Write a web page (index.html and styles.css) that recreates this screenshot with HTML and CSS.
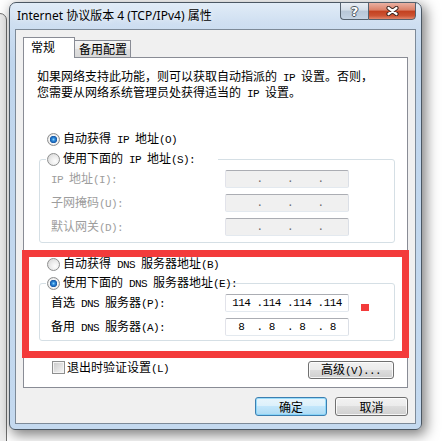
FILE: index.html
```html
<!DOCTYPE html>
<html lang="zh-CN">

<head>
    <meta charset="UTF-8">
    <title>Internet 协议版本 4 (TCP/IPv4) 属性</title>
    <link rel="stylesheet" href="styles.css">
</head>

<body>
    <div class="backwin"></div>

    <div class="window">
        <div class="titlebar">
            <div class="caption">Internet 协议版本 4 (TCP/IPv4) 属性</div>
            <div class="capbtns">
                <div class="capbtn help">?</div>
                <div class="capbtn close">
                    <svg width="13" height="10" viewBox="0 0 13 10">
                        <path d="M2.5 2 L10.5 8 M10.5 2 L2.5 8" stroke="#3d2620" stroke-width="4.2" stroke-linecap="round" fill="none" />
                        <path d="M2.5 2 L10.5 8 M10.5 2 L2.5 8" stroke="#fff" stroke-width="2.2" stroke-linecap="round" fill="none" />
                    </svg>
                </div>
            </div>
        </div>

        <div class="client">
            <div class="tabs">
                <div class="tab active">常规</div>
                <div class="tab">备用配置</div>
            </div>

            <div class="panel">
                <p class="intro">如果网络支持此功能，则可以获取自动指派的<span class="en"> IP </span>设置。否则，<br>您需要从网络系统管理员处获得适当的<span class="en"> IP </span>设置。</p>

                <div class="radio-row first"><span class="radio on"></span><span class="txt">自动获得<span class="en"> IP </span>地址<span class="en">(O)</span></span></div>

                <fieldset class="group">
                    <legend>
                        <div class="radio-row"><span class="radio"></span><span class="txt">使用下面的<span class="en"> IP </span>地址<span class="en">(S):</span></span></div>
                    </legend>
                    <div class="field disabled">
                        <label><span class="en">IP </span>地址<span class="en">(I):</span></label>
                        <div class="ipbox"><span></span><span></span><span></span><span></span></div>
                    </div>
                    <div class="field disabled">
                        <label>子网掩码<span class="en">(U):</span></label>
                        <div class="ipbox"><span></span><span></span><span></span><span></span></div>
                    </div>
                    <div class="field disabled">
                        <label>默认网关<span class="en">(D):</span></label>
                        <div class="ipbox"><span></span><span></span><span></span><span></span></div>
                    </div>
                </fieldset>

                <div class="dns">
                    <div class="radio-row dns-auto"><span class="radio"></span><span class="txt">自动获得<span class="en"> DNS </span>服务器地址<span class="en">(B)</span></span></div>

                    <fieldset class="group dns-group">
                        <legend>
                            <div class="radio-row"><span class="radio on"></span><span class="txt">使用下面的<span class="en"> DNS </span>服务器地址<span class="en">(E):</span></span></div>
                        </legend>
                        <div class="field">
                            <label>首选<span class="en"> DNS </span>服务器<span class="en">(P):</span></label>
                            <div class="ipbox"><span>114</span><span>114</span><span>114</span><span>114</span></div>
                            <span class="mark"></span>
                        </div>
                        <div class="field">
                            <label>备用<span class="en"> DNS </span>服务器<span class="en">(A):</span></label>
                            <div class="ipbox"><span>8</span><span>8</span><span>8</span><span>8</span></div>
                        </div>
                    </fieldset>
                </div>

                <div class="options">
                    <div class="check"><span class="checkbox"></span><span class="txt">退出时验证设置<span class="en">(L)</span></span></div>
                    <button class="btn adv">高级<span class="en">(V)...</span></button>
                </div>
            </div>

            <div class="actions">
                <button class="btn default ok">确定</button>
                <button class="btn cancel">取消</button>
            </div>
        </div>
    </div>
</body>

</html>
```

FILE: styles.css
```css
* {
    box-sizing: border-box;
}

html,
body {
    margin: 0;
    height: 100%;
}

body {
    position: relative;
    overflow: hidden;
    background: #fff;
    font-family: "Noto Sans CJK SC", "Noto Sans", sans-serif;
    font-size: 12px;
    color: #000;
}

.en {
    font-family: "Liberation Mono", monospace;
    font-size: 11px;
    letter-spacing: -0.6px;
    white-space: pre;
}

/* window peeking out behind the dialog */
.backwin {
    position: absolute;
    left: -20px;
    top: 13px;
    width: 27px;
    height: 440px;
    background: #ececec;
    border: 1px solid #6f6f6f;
    border-radius: 0 7px 0 0;
}

.window {
    position: relative;
    display: flex;
    flex-direction: column;
    width: 413px;
    height: 428px;
    margin: 2px 0 0 9px;
    padding: 0 5px 5px;
    border: 1px solid #4b5763;
    border-radius: 7px 7px 6px 6px;
    background: linear-gradient(180deg, #e1ecf7 0, #cfdff1 20px, #c0d6ed 60px, #c4d9ef 100%);
    box-shadow: 3px 4px 13px 1px rgba(0, 0, 0, .5);
}

.titlebar {
    display: flex;
    justify-content: space-between;
    align-items: flex-start;
    height: 26px;
    flex: none;
}

.caption {
    padding-left: 2px;
    line-height: 25px;
    font-family: "Noto Sans", "Noto Sans CJK SC", sans-serif;
    font-size: 12px;
    text-shadow: 0 0 6px rgba(255, 255, 255, .95);
}

.capbtns {
    display: flex;
    margin-top: -1px;
}

.capbtn {
    display: flex;
    align-items: center;
    justify-content: center;
    height: 18px;
    border: 1px solid #55616e;
}

.help {
    width: 28px;
    border-right: none;
    border-radius: 0 0 0 4px;
    background: linear-gradient(#e9eef4 0, #d3dde8 45%, #b7c6d7 50%, #c4d3e4 100%);
    color: #fff;
    font-family: "DejaVu Sans", sans-serif;
    font-weight: bold;
    font-size: 13px;
    text-shadow: 1px 0 #4b5560, -1px 0 #4b5560, 0 1px #4b5560, 0 -1px #4b5560;
}

.close {
    width: 48px;
    border-radius: 0 0 4px 0;
    background: linear-gradient(#eab0a2 0, #db8068 45%, #c3401f 50%, #cc5333 80%, #e2876c 100%);
}

.client {
    flex: 1;
    display: flex;
    flex-direction: column;
    padding: 7px;
    background: #f0f0f0;
    border: 1px solid #7d8a98;
}

.tabs {
    display: flex;
    align-items: flex-end;
    height: 20px;
    flex: none;
}

.tab {
    height: 17px;
    width: 57px;
    margin-left: -1px;
    padding-left: 4px;
    line-height: 16px;
    border: 1px solid #898c95;
    border-bottom: none;
    background: linear-gradient(#f5f5f5 0, #ebebeb 50%, #dfdfdf 51%, #d8d8d8 100%);
}

.tab.active {
    position: relative;
    z-index: 1;
    height: 21px;
    width: 52px;
    margin-left: 0;
    margin-bottom: -1px;
    padding-left: 7px;
    line-height: 18px;
    background: #fff;
}

.panel {
    height: 331px;
    flex: none;
    background: #fff;
    border: 1px solid #898c95;
}

.intro {
    margin: 11px 0 0 13px;
    line-height: 13px;
    white-space: nowrap;
}

.radio-row {
    display: flex;
    align-items: center;
    gap: 3px;
    height: 14px;
    line-height: 14px;
    white-space: nowrap;
}

.radio-row.first {
    margin: 31px 0 0 23px;
}

.radio {
    flex: none;
    width: 13px;
    height: 13px;
    border-radius: 50%;
    border: 1px solid #8e8f8f;
    background: radial-gradient(circle at 65% 65%, #fdfdfd 0, #ececec 45%, #d2d2d2 100%);
}

.radio.on {
    background: radial-gradient(circle at 50% 50%, #8ad6fc 0, #2a86d8 1.6px, #195aa8 3.4px, #f6f6f6 4px, #ececec 5px, #d2d2d2 6px);
}

.group {
    width: 356px;
    min-width: 0;
    margin: 6px 0 0 15px;
    padding: 0 0 6px;
    border: 1px solid #d5dfe5;
    border-radius: 3px;
}

.group legend {
    width: 172px;
    margin-left: 6px;
    padding: 0 0 0 1px;
}

.field {
    display: flex;
    align-items: center;
    height: 18px;
    margin-top: 6px;
    white-space: nowrap;
}

legend + .field {
    margin-top: 4px;
}

.field label {
    width: 185px;
    padding-left: 11px;
    line-height: 14px;
}

.field.disabled label {
    color: #9d9d9d;
}

.ipbox {
    display: grid;
    grid-template-columns: repeat(4, 1fr);
    width: 124px;
    height: 18px;
    border: 1px solid;
    border-color: #abadb3 #dbdfe6 #e3e9ef #e2e3ea;
    border-radius: 2px;
    background: #fff;
    font-family: "Liberation Mono", monospace;
    font-size: 11px;
    letter-spacing: -0.6px;
    line-height: 16px;
}

.ipbox span {
    position: relative;
    text-align: center;
}

.ipbox span + span::before {
    content: ".";
    position: absolute;
    left: 0;
}

.field.disabled .ipbox {
    background: #f0f0f0;
    color: #6a6a6a;
}

.dns {
    margin: 7px -2px 0;
    padding-bottom: 10px;
    border: 7px solid #f33b3b;
}

.dns-auto {
    padding-left: 18px;
}

.dns-group {
    margin: 5px 0 0 10px;
    padding-bottom: 4px;
}

.mark {
    align-self: flex-end;
    width: 8px;
    height: 7px;
    margin: 0 0 1px 12px;
    background: #f33b3b;
}

.options {
    display: flex;
    justify-content: space-between;
    align-items: flex-start;
    margin-top: 3px;
    padding: 0 13px 0 28px;
}

.check {
    display: flex;
    align-items: center;
    gap: 2px;
    height: 13px;
    line-height: 13px;
}

.checkbox {
    flex: none;
    width: 13px;
    height: 13px;
    border: 1px solid #8e8f8f;
    background: linear-gradient(135deg, #c9c9c9, #f7f7f7);
    box-shadow: inset 0 0 0 1px #f4f4f4;
}

.btn {
    height: 19px;
    padding: 0;
    font: inherit;
    line-height: 15px;
    color: #000;
    border: 1px solid #707070;
    border-radius: 3px;
    background: linear-gradient(#f2f2f2 0, #ebebeb 49%, #dddddd 50%, #cfcfcf 100%);
    box-shadow: inset 0 0 0 1px rgba(255, 255, 255, .8);
}

.btn.adv {
    width: 86px;
    height: 18px;
    line-height: 14px;
}

.btn.default {
    border-color: #3c7fb1;
    background: linear-gradient(#e8f5fc 0, #dcf0fb 49%, #c2e6fb 50%, #addaf3 100%);
    box-shadow: inset 0 0 0 1px rgba(120, 210, 250, .7);
}

.actions {
    display: flex;
    justify-content: flex-end;
    gap: 8px;
    margin-top: 9px;
}

.ok {
    width: 72px;
}

.cancel {
    width: 73px;
}
```
